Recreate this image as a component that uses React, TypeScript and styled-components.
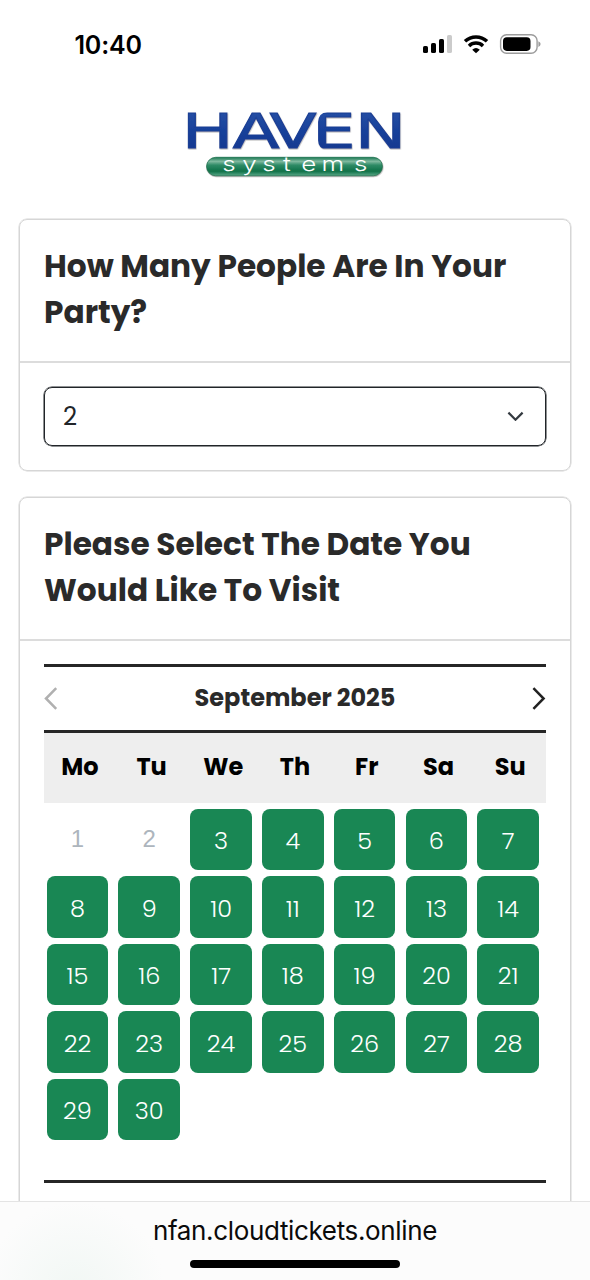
import React from "react";
import styled, { createGlobalStyle } from "styled-components";

const Global = createGlobalStyle`
  * { box-sizing: border-box; }
  body { margin: 0; background: #fff; font-family: Poppins, Inter, "Open Sans", sans-serif; }
  button { font: inherit; border: 0; padding: 0; background: none; }
`;

const Screen = styled.div`
  display: flex;
  flex-direction: column;
  width: 590px;
  height: 1280px;
  overflow: hidden;
  background: #fff;
`;

const StatusBar = styled.header`
  flex: none;
  display: flex;
  justify-content: space-between;
  align-items: center;
  height: 88px;
  padding: 0 49px 0 74.5px;
`;

const Clock = styled.span`
  padding-top: 1px;
  font: 600 25px/30px Inter, sans-serif;
  letter-spacing: -0.2px;
  color: #000;
`;

const LogoRow = styled.div`
  flex: none;
  display: flex;
  justify-content: center;
  height: 131px;
  padding-top: 12px;
`;

const Content = styled.main`
  flex: 1;
  min-height: 0;
  overflow: hidden;
  display: flex;
  flex-direction: column;
  gap: 26px;
  padding: 0 19px;
  margin-top: -2px;
  padding-top: 2px;
`;

const Card = styled.section<{ $height: number }>`
  flex: none;
  height: ${(p) => p.$height}px;
  border: 1px solid #d6d6d6;
  border-radius: 8px;
  box-shadow: 0 0 0 0.5px #d6d6d6;
`;

const CardHeader = styled.div`
  height: 143px;
  padding: 23px 24px 0;
  border-bottom: 2px solid #dcdcdc;
`;

const Title = styled.h2`
  margin: 0;
  font-size: 31.2px;
  line-height: 46.4px;
  font-weight: 700;
  color: #2a2a2a;
`;

const Line = styled.span`
  display: block;
  white-space: nowrap;
`;

const CardBody = styled.div<{ $top?: number }>`
  padding: ${(p) => p.$top ?? 24}px 24px 0;
`;

const Select = styled.button`
  display: flex;
  align-items: center;
  justify-content: space-between;
  width: 100%;
  height: 59px;
  padding: 0 21.5px 1px 18px;
  border: 1px solid #212529;
  border-radius: 8px;
  box-shadow: 0 0 0 0.5px #212529;
  font-size: 24.5px;
  color: #212529;
`;

const MonthBar = styled.div`
  display: flex;
  align-items: center;
  justify-content: space-between;
  height: 69px;
  border-top: 3px solid #262626;
  border-bottom: 3px solid #262626;
`;

const Month = styled.h3`
  margin: 0;
  padding-bottom: 2px;
  font-size: 24px;
  line-height: 36px;
  font-weight: 700;
  color: #2a2a2a;
`;

const WeekRow = styled.div`
  display: grid;
  grid-template-columns: repeat(7, 1fr);
  align-items: center;
  height: 69.5px;
  padding-bottom: 2px;
  background: #eee;
  text-align: center;
  font-size: 24px;
  font-weight: 700;
  color: #000;
`;

const Days = styled.div`
  display: grid;
  grid-template-columns: repeat(7, 71.8px);
  grid-auto-rows: 61.5px;
  row-gap: 6px;
  height: 380px;
  padding: 6px 0 0 2.7px;
  align-content: start;
  border-bottom: 3px solid #262626;
`;

const Day = styled.button<{ $open: boolean }>`
  width: 61.5px;
  height: 61.5px;
  padding-top: ${(p) => (p.$open ? 3 : 0)}px;
  border-radius: 8px;
  background: ${(p) => (p.$open ? "#198754" : "transparent")};
  color: ${(p) => (p.$open ? "#fff" : "#adb5bd")};
  font-family: ${(p) => (p.$open ? "inherit" : '"Liberation Sans", sans-serif')};
  font-size: 24px;
  font-weight: 300;
`;

const AddressBar = styled.footer`
  flex: none;
  display: flex;
  flex-direction: column;
  align-items: center;
  height: 79px;
  padding-top: 13px;
  border-top: 1px solid #e4e4e4;
  background: radial-gradient(circle at 75px 90px, #f1f7f4 0, rgba(251, 252, 251, 0) 90px), #fcfcfc;
`;

const Url = styled.span`
  font: 400 26px/32px Inter, sans-serif;
  letter-spacing: -0.35px;
  color: #0a0a0a;
`;

const HomeIndicator = styled.div`
  width: 210px;
  height: 8px;
  margin-top: 13px;
  border-radius: 4px;
  background: #000;
`;

const StatusIcons = () => (
  <svg width="120" height="24" viewBox="421 32 120 24">
    <rect x="423" y="46" width="5" height="7" rx="1.6" />
    <rect x="431" y="43" width="5" height="10" rx="1.6" />
    <rect x="439" y="39" width="5" height="14" rx="1.6" />
    <rect x="447" y="35" width="5" height="18" rx="1.6" fill="#cbcbcb" />
    <g fill="none" stroke="#000" strokeWidth="3.5">
      <path d="M465 41.3a16.2 16.2 0 0 1 22 0" />
      <path d="M469 45.9a10.2 10.2 0 0 1 14 0" />
    </g>
    <path d="M472.2 49.7a5.8 5.8 0 0 1 7.6 0L476 53.3z" />
    <rect x="500.6" y="34.8" width="36.5" height="18.5" rx="6" fill="none" stroke="#9c9c9c" strokeWidth="1.4" />
    <rect x="503" y="37.3" width="27.5" height="13.6" rx="3.8" />
    <path d="M538.4 41.2q2.2.8 2.2 2.9t-2.2 2.9z" fill="#9c9c9c" />
  </svg>
);

const Logo = () => (
  <svg width="230" height="82" viewBox="180 100 230 82">
    <defs>
      <linearGradient id="blue" x1="0" y1="0" x2="0" y2="1">
        <stop offset="0" stopColor="#2c54a8" />
        <stop offset=".5" stopColor="#17409a" />
        <stop offset="1" stopColor="#12348a" />
      </linearGradient>
      <linearGradient id="green" x1="0" y1="0" x2="0" y2="1">
        <stop offset="0" stopColor="#1b7953" />
        <stop offset=".22" stopColor="#7fb99f" />
        <stop offset=".42" stopColor="#2f8b66" />
        <stop offset=".75" stopColor="#0f7148" />
        <stop offset="1" stopColor="#5aa886" />
      </linearGradient>
      <filter id="soft" x="-5%" y="-10%" width="110%" height="130%">
        <feDropShadow dx=".5" dy=".9" stdDeviation=".6" floodColor="#555" floodOpacity=".5" />
      </filter>
      <mask id="roundE" maskUnits="userSpaceOnUse" x="180" y="100" width="230" height="82">
        <rect x="180" y="100" width="230" height="82" fill="#fff" />
        <path d="M317.8 112h9.5q-9 .6-9.5 11zM317.8 150h9.5q-9-.6-9.5-11z" fill="#000" />
      </mask>
    </defs>
    <g filter="url(#soft)">
      <g mask="url(#roundE)">
        <text
          transform="translate(0 148.3) scale(1.45 1)"
          x="125.4 160.4 185.9 215.2 244.6"
          y="0"
          fontFamily="DejaVu Sans, sans-serif"
          fontSize="47.5"
          fill="url(#blue)"
          stroke="#1a3f95"
          strokeWidth=".9"
        >
          HAVEN
        </text>
      </g>
      <rect x="206.5" y="157.3" width="176" height="18.5" rx="9.2" fill="url(#green)" stroke="#176b49" strokeWidth=".7" />
    </g>
    <text
      transform="translate(0 171.2) scale(1.3 1)"
      x="171 186.3 201.8 217.8 231.7 247.4 272.4"
      y="0"
      fontFamily="Inter, sans-serif"
      fontSize="20"
      fontWeight="300"
      fill="#fff"
    >
      systems
    </text>
  </svg>
);

const Chevron = ({ d, color, w, h, stroke }: { d: string; color: string; w: number; h: number; stroke: number }) => (
  <svg width={w} height={h} viewBox={`0 0 ${w} ${h}`} fill="none" stroke={color} strokeWidth={stroke}>
    <path d={d} />
  </svg>
);

const weekdays = ["Mo", "Tu", "We", "Th", "Fr", "Sa", "Su"];
const days = Array.from({ length: 30 }, (_, i) => i + 1);

export default function App() {
  return (
    <Screen>
      <Global />
      <StatusBar>
        <Clock>10:40</Clock>
        <StatusIcons />
      </StatusBar>
      <LogoRow>
        <Logo />
      </LogoRow>
      <Content>
        <Card $height={252}>
          <CardHeader>
            <Title>
              <Line>How Many People Are In Your</Line>
              <Line>Party?</Line>
            </Title>
          </CardHeader>
          <CardBody>
            <Select>
              2
              <Chevron d="M1.4 1.6 8.5 8.7 15.6 1.6" color="#343a40" w={17} h={10} stroke={2.2} />
            </Select>
          </CardBody>
        </Card>
        <Card $height={760}>
          <CardHeader>
            <Title>
              <Line>Please Select The Date You</Line>
              <Line>Would Like To Visit</Line>
            </Title>
          </CardHeader>
          <CardBody $top={23}>
            <MonthBar>
              <Chevron d="M12.2 1.2 2 11.5 12.2 21.8" color="#b0b0b0" w={14} h={23} stroke={2.5} />
              <Month>September 2025</Month>
              <Chevron d="M1.4 1.2 11.6 11.5 1.4 21.8" color="#222" w={14} h={23} stroke={2.5} />
            </MonthBar>
            <WeekRow>
              {weekdays.map((d) => (
                <span key={d}>{d}</span>
              ))}
            </WeekRow>
            <Days>
              {days.map((d) => (
                <Day key={d} $open={d > 2}>
                  {d}
                </Day>
              ))}
            </Days>
          </CardBody>
        </Card>
      </Content>
      <AddressBar>
        <Url>nfan.cloudtickets.online</Url>
        <HomeIndicator />
      </AddressBar>
    </Screen>
  );
}
